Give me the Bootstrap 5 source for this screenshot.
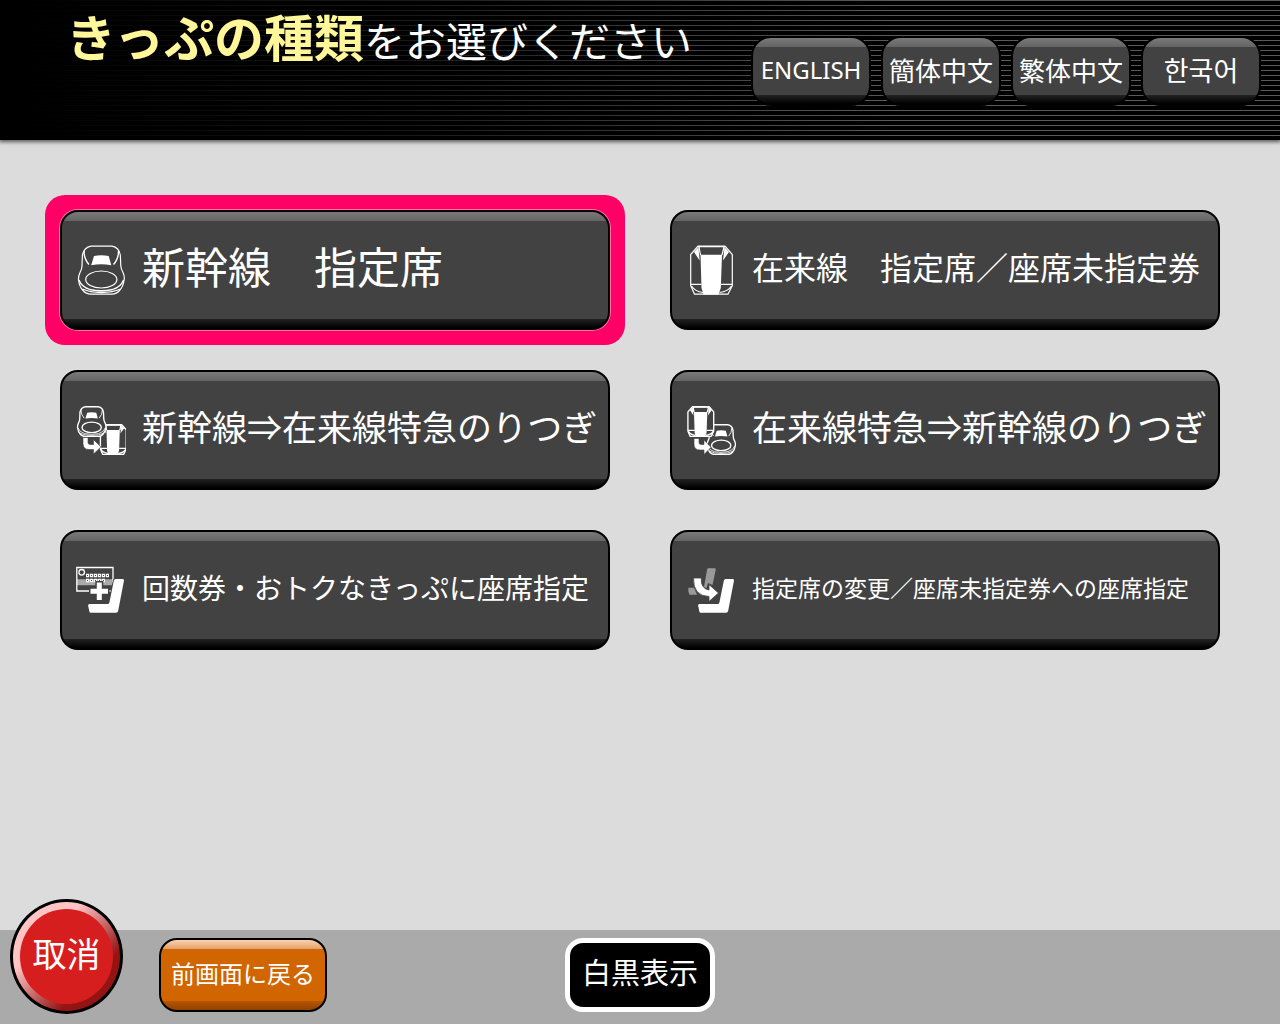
<!DOCTYPE html>
<html lang="ja">
<head>
<meta charset="utf-8">
<meta name="viewport" content="width=device-width, initial-scale=1">
<title>きっぷの種類</title>
<link href="https://cdn.jsdelivr.net/npm/bootstrap@5.3.0/dist/css/bootstrap.min.css" rel="stylesheet">
<style>
body { font-family: "Noto Sans CJK JP", sans-serif; background: #dcdcdc; }
.topbar {
  height: 140px;
  background:
    linear-gradient(90deg, #000 2%, rgba(0,0,0,.72) 32%, rgba(0,0,0,0) 70%),
    repeating-linear-gradient(180deg, #5a5a5a 0 1px, #000 1px 5px);
  box-shadow: 0 1px 4px 1px rgba(0,0,0,.6);
  padding: 0 19px 0 66px;
}
.headline { font-size: 41px; line-height: 60px; padding-top: 5px; }
.headline strong { font-size: 50px; color: #fff799; }
.glossy {
  color: #fff; border: 2px solid #000; line-height: 1.2;
  background:
    linear-gradient(#7a7a7a, #646464) top / 100% 9px no-repeat,
    linear-gradient(#222, #000) bottom / 100% 9px no-repeat,
    #424242;
}
.languages { gap: 10px; padding-top: 36px; }
.lang-btn { width: 120px; height: 70px; border-radius: 20px; font-size: 26px; padding: 0 0 2px; }
.lang-en { font-family: "Noto Sans", sans-serif; font-size: 24px; }
.lang-tc { font-family: "Noto Sans CJK TC", sans-serif; }
.lang-ko { font-family: "Noto Sans CJK KR", sans-serif; font-size: 27px; }
.choices { padding: 70px 60px 40px; }
.choices .row { --bs-gutter-x: 60px; --bs-gutter-y: 40px; }
.choice {
  height: 120px; width: 100%; border-radius: 18px; padding: 0 0 0 14px; gap: 16px;
  display: flex; align-items: center; text-align: left; white-space: nowrap;
}
.choice svg { width: 50px; height: 50px; flex: none; }
.choice span { padding-bottom: 8px; }
.choice.t-28 span, .choice.t-23 span { padding-bottom: 4px; }
.selected { position: relative; z-index: 0; }
.selected::before { content: ""; position: absolute; inset: -15px 15px; border-radius: 20px; background: #f06; z-index: -1; }
.selected .choice { box-shadow: 0 0 0 1px #ff6aa5; }
.rail { stroke-width: var(--rail, 1.2px); }
.small-train { --rail: 2.2px; }
.t-43 { font-size: 43px; } .t-35 { font-size: 35px; } .t-32 { font-size: 32px; }
.t-28 { font-size: 28px; } .t-23 { font-size: 23px; }
.bottombar { height: 94px; background: #aaa; padding: 8px 10px 0; }
.bottombar > div { flex: 1 1 0; }
.cancel {
  width: 113px; height: 115px; margin-top: -39px; border-radius: 50%; border: 3px solid #000;
  padding: 7px; background: linear-gradient(135deg, #ffc4c4 32%, #941414 72%);
}
.cancel span {
  display: flex; align-items: center; justify-content: center; width: 100%; height: 100%;
  border-radius: 50%; background: #d71e1e; color: #fff; font-size: 34px; padding-bottom: 8px;
}
.back {
  width: 168px; height: 74px; border: 2px solid #000; border-radius: 18px; color: #fff; font-size: 24px;
  padding: 0 0 5px; margin-left: 36px; white-space: nowrap;
  background:
    linear-gradient(#fbd3ae, #e3a06a) top / 100% 9px no-repeat,
    linear-gradient(#b85500, #8f4200) bottom / 100% 9px no-repeat,
    #d16500;
}
.mono { width: 150px; height: 74px; border: 5px solid #fff; border-radius: 18px; background: #000; color: #fff; font-size: 29px; padding: 0 0 7px; white-space: nowrap; }
</style>
</head>
<body class="d-flex flex-column min-vh-100">

<svg width="0" height="0" class="position-absolute" aria-hidden="true">
  <symbol id="shinkansen" viewBox="0 0 50 50">
    <g fill="none" stroke="#fff" stroke-linejoin="round">
      <path class="rail" fill="#424242" d="M15 1.200H36Q43 2.500 44.300 10L44.800 21Q45 24 47 27.500Q49 32 48 35.500Q47 42 43.500 45.500Q40.500 49 36 49.200H15Q10 49 7 45.500Q3.500 42 2.600 35.500Q2 32 4 27.500Q6 24 6 21L6.400 10Q8 2.500 15 1.200Z"/>
      <path stroke-width="1.400" d="M8 6Q8 14 13 19.500M42.500 6Q42.500 14 37.500 19.500"/>
      <ellipse class="rail" cx="25.300" cy="34.500" rx="15.600" ry="8.500"/>
      <path stroke-width="1.300" d="M3 35Q5.500 42 14 44.500Q25 47 36.500 44.500Q45 42 47.500 35M6.500 44Q14 47.500 25 47.500Q37 47.500 44.500 44"/>
    </g>
    <path fill="#fff" d="M18 11Q25 9.500 32.700 11L35.300 20.200Q25 18.500 15.200 20.200Z"/>
  </symbol>
  <symbol id="express" viewBox="0 0 50 50">
    <path class="rail" fill="#424242" stroke="#fff" d="M12 1.200H39L46.300 9.500V40.500L42 49.200H8.500L4.700 40.500V9.500Z"/>
    <path class="rail" fill="none" stroke="#fff" d="M12 1.600H39M13 2L14.500 10M38 2L36 10M4.700 39.300H15.500M35 39.300H46.300M5.500 41Q9 46.500 17 47.500M45.500 41Q42 46.500 33.500 47.500"/>
    <path fill="#fff" d="M14.500 9.700H36L34.800 43L32.500 49.500H17.500L15.500 43ZM8 7L12.500 2L13.600 15.500ZM43 7L38.500 2L37 15.500Z"/>
  </symbol>
  <symbol id="seat" viewBox="0 0 50 50">
    <path fill="#fff" d="M39.700 14H46.800Q48.200 14 48 15.600L42.200 45.800Q41.800 47.700 40 47.700H15Q13.500 47.700 13.300 46.200L12.100 40.500Q12 39 13.500 39H31.500Q33 39 33.400 37.500L37.800 15.700Q38.200 14 39.700 14Z"/>
  </symbol>
</svg>

<header class="topbar d-flex justify-content-between align-items-start">
  <h1 class="headline text-white text-nowrap fw-normal mb-0"><strong>きっぷの種類</strong>をお選びください</h1>
  <div class="languages d-flex">
    <button type="button" class="btn glossy lang-btn lang-en" lang="en">ENGLISH</button>
    <button type="button" class="btn glossy lang-btn">簡体中文</button>
    <button type="button" class="btn glossy lang-btn lang-tc">繁体中文</button>
    <button type="button" class="btn glossy lang-btn lang-ko" lang="ko">한국어</button>
  </div>
</header>

<main class="choices flex-grow-1">
  <div class="row row-cols-2">
    <div class="col selected"><button type="button" class="btn glossy choice t-43">
      <svg aria-hidden="true"><use href="#shinkansen"/></svg><span>新幹線　指定席</span></button></div>
    <div class="col"><button type="button" class="btn glossy choice t-32">
      <svg aria-hidden="true"><use href="#express"/></svg><span>在来線　指定席／座席未指定券</span></button></div>
    <div class="col"><button type="button" class="btn glossy choice t-35">
      <svg class="small-train" viewBox="0 0 50 50" aria-hidden="true">
        <use href="#express" x="21.500" y="19" width="31" height="31"/>
        <use href="#shinkansen" x="0" y="1" width="31" height="31"/>
        <path fill="#fff" stroke="#424242" stroke-width=".6" d="M7 32.500H12V37.500Q12 39.500 14 39.500H17.500V34.500L25 42L17.500 49V44.500H13Q7 44.500 7 38.500Z"/>
      </svg><span>新幹線⇒在来線特急のりつぎ</span></button></div>
    <div class="col"><button type="button" class="btn glossy choice t-35">
      <svg class="small-train" viewBox="0 0 50 50" aria-hidden="true">
        <use href="#shinkansen" x="19.500" y="19" width="31" height="31"/>
        <use href="#express" x="-1" y="1" width="31" height="31"/>
        <path fill="#fff" stroke="#424242" stroke-width=".6" d="M8 33.500H13V37.500Q13 39.500 15 39.500H18V35L25 42.300L18 49.500V45H14Q8 45 8 39Z"/>
      </svg><span>在来線特急⇒新幹線のりつぎ</span></button></div>
    <div class="col"><button type="button" class="btn glossy choice t-28">
      <svg viewBox="0 0 50 50" aria-hidden="true">
        <path fill="#aaa" d="M1 14.300H37V20.300H1Z"/>
        <path fill="none" stroke="#fff" stroke-width="1.300" d="M.8 2.500H37V26H.8Z"/>
        <circle cx="5.700" cy="7.300" r="2.800" fill="none" stroke="#fff" stroke-width="1.300"/>
        <path fill="none" stroke="#fff" stroke-width="3.600" stroke-dasharray="3.300 .7" d="M10 10.500H33M10 15.500H29"/>
        <path fill="none" stroke="#424242" stroke-width="1.200" stroke-dasharray="1 3" stroke-dashoffset="-1" d="M10 10.500H33M10 15.500H29"/>
        <path fill="none" stroke="#424242" stroke-width="8" d="M13 26.200H33.500M23.300 16V36.500"/>
        <use href="#seat" width="50" height="50" stroke="#424242" stroke-width="2"/>
        <use href="#seat" width="50" height="50"/>
        <path fill="none" stroke="#fff" stroke-width="5" d="M14.500 26.200H32M23.300 17.500V35"/>
      </svg><span>回数券・おトクなきっぷに座席指定</span></button></div>
    <div class="col"><button type="button" class="btn glossy choice t-23">
      <svg viewBox="0 0 50 50" aria-hidden="true">
        <path fill="#999" d="M22 3.300H29Q30 3.500 29.700 5L26.500 20L22 18L20.500 23L18 22L21 5Q21.200 3.500 22 3.300ZM2.500 22.700H8L11 29.700H3.500Q1.500 26 2.500 22.700Z"/>
        <path fill="#fff" stroke="#424242" stroke-width=".8" d="M7.500 13H15.300Q14.500 23.500 23 25V19.500L32.500 28L23 36.500V31.500Q7 31 7.500 13Z"/>
        <use href="#seat" width="50" height="50"/>
      </svg><span>指定席の変更／座席未指定券への座席指定</span></button></div>
  </div>
</main>

<footer class="bottombar d-flex align-items-start">
  <div class="d-flex align-items-start">
    <button type="button" class="cancel"><span>取消</span></button>
    <button type="button" class="back">前画面に戻る</button>
  </div>
  <button type="button" class="mono">白黒表示</button>
  <div></div>
</footer>

<script src="https://cdn.jsdelivr.net/npm/bootstrap@5.3.0/dist/js/bootstrap.bundle.min.js"></script>
</body>
</html>
